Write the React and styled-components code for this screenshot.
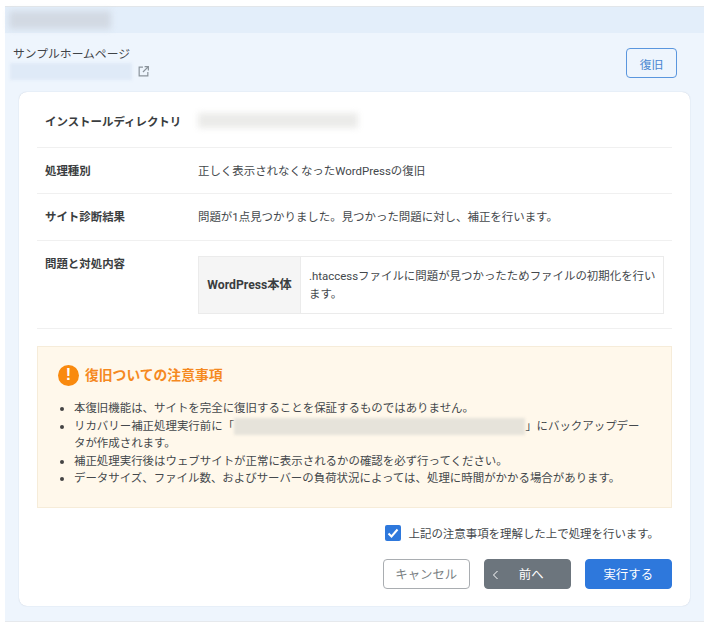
import React from 'react';
import styled, { createGlobalStyle } from 'styled-components';

const GlobalStyle = createGlobalStyle`
  html, body {
    margin: 0;
    padding: 0;
    background: #fff;
    font-family: Roboto, "Noto Sans CJK JP", "Liberation Sans", sans-serif;
    font-size: 11.45px;
    color: #3c4043;
  }
`;

const Page = styled.div`
  width: 710px;
  height: 626px;
  padding: 6px 6px 4px 5px;
  box-sizing: border-box;
`;

const Panel = styled.div`
  height: 100%;
  background: #eef5fd;
  border-top: 1px solid #e2e6ea;
  border-bottom: 1px solid #e6e9ed;
  box-sizing: border-box;
`;

const TopBar = styled.div`
  height: 26px;
  background: #e3eefa;
  display: flex;
  align-items: center;
  padding-left: 4px;
`;

const Blur = styled.div`
  width: ${(p) => p.$w}px;
  height: ${(p) => p.$h}px;
  background: ${(p) => p.$color};
  filter: blur(${(p) => p.$blur || 2}px);
  flex: none;
`;

const SiteRow = styled.div`
  display: flex;
  justify-content: space-between;
  height: 59px;
  padding: 12px 27px 0 8px;
  box-sizing: border-box;
`;

const SiteName = styled.div`
  line-height: 18px;
  font-size: 11.8px;
  color: #3f4347;
`;

const SiteUrl = styled.div`
  display: flex;
  align-items: center;
  gap: 5px;
  height: 18px;
  margin: -1px 0 0 -3px;
  color: #8a939b;
`;

const RestoreButton = styled.button`
  width: 51px;
  height: 30px;
  margin-top: 3px;
  font: inherit;
  font-size: 11.8px;
  color: #4a86d0;
  background: #eef5fd;
  border: 1.5px solid #5a96de;
  border-radius: 4px;
`;

const Card = styled.div`
  margin: 0 14px;
  height: 514px;
  padding: 9px 18px 0;
  box-sizing: border-box;
  background: #fff;
  border-radius: 8px;
  box-shadow: 0 0 1px rgba(120, 140, 170, 0.5);
`;

const InfoRow = styled.div`
  display: grid;
  grid-template-columns: 153px 1fr;
  height: ${(p) => p.$h}px;
  padding: ${(p) => p.$top}px 0 0 8px;
  box-sizing: border-box;
  border-bottom: 1px solid #f0f0f0;
  line-height: 18px;
`;

const Label = styled.div`
  font-weight: 700;
  color: #3a3d40;
`;

const Value = styled.div`
  color: #44484c;
`;

const IssueTable = styled.div`
  display: grid;
  grid-template-columns: 102px 1fr;
  width: 466px;
  height: 58px;
  margin-top: 1px;
  border: 1px solid #ebebeb;
  box-sizing: border-box;
`;

const IssueCell = styled.div`
  display: flex;
  align-items: center;
`;

const IssueHead = styled(IssueCell)`
  justify-content: center;
  background: #f5f5f5;
  border-right: 1px solid #ebebeb;
  font-size: 12.2px;
  font-weight: 700;
  color: #3a3d40;
`;

const IssueBody = styled(IssueCell)`
  padding: 0 3px 0 8px;
  color: #44484c;
  line-height: 18px;
`;

const Notice = styled.div`
  height: 162px;
  margin-top: 17px;
  padding: 17px 20px 0;
  box-sizing: border-box;
  background: #fff8eb;
  border: 1px solid #f6ecd9;
`;

const NoticeTitle = styled.div`
  display: flex;
  align-items: center;
  gap: 6px;
  font-size: 13.8px;
  font-weight: 700;
  line-height: 22px;
  color: #f5891f;
`;

const WarnIcon = styled.span`
  width: 21px;
  height: 21px;
  flex: none;
  border-radius: 50%;
  background: #f98a0f;
  color: #fff;
  display: flex;
  align-items: center;
  justify-content: center;
  font-family: "Liberation Sans", sans-serif;
  font-size: 16px;
  font-weight: 700;
`;

const NoticeList = styled.ul`
  list-style: none;
  margin: 14px 0 0;
  padding: 0 0 0 16px;
  width: 570px;
  line-height: 17.5px;
  color: #44484c;
`;

const NoticeItem = styled.li`
  position: relative;
  &::before {
    content: '';
    position: absolute;
    left: -14px;
    top: 7px;
    width: 4px;
    height: 4px;
    border-radius: 50%;
    background: #444;
  }
`;

const InlineBlur = styled.span`
  display: inline-block;
  vertical-align: middle;
  width: 291px;
  height: 17px;
  background: #e6e3da;
  filter: blur(1.5px);
`;

const Agree = styled.label`
  display: flex;
  align-items: center;
  justify-content: flex-end;
  gap: 8px;
  height: 16px;
  margin-top: 17px;
  padding-right: 13px;
  color: #44484c;
`;

const CheckBox = styled.span`
  width: 16px;
  height: 16px;
  border-radius: 2px;
  background: #2e78dc;
  display: flex;
  align-items: center;
  justify-content: center;
`;

const Actions = styled.div`
  display: flex;
  justify-content: flex-end;
  gap: 13.5px;
  margin-top: 18px;
`;

const ActionButton = styled.button`
  position: relative;
  width: 87.5px;
  height: 30px;
  padding: 0 0 0 ${(p) => p.$shift || 0}px;
  font: inherit;
  font-size: 12.4px;
  border-radius: 4px;
  color: ${(p) => p.$color};
  background: ${(p) => p.$bg};
  border: 1px solid ${(p) => p.$border};
`;

const Chevron = styled.svg`
  position: absolute;
  left: 7px;
  top: 10px;
`;

export default function App() {
  return (
    <>
      <GlobalStyle />
      <Page>
        <Panel>
          <TopBar>
            <Blur $w={102} $h={18} $color="#d2d9e3" $blur={3} />
          </TopBar>
          <SiteRow>
            <div>
              <SiteName>サンプルホームページ</SiteName>
              <SiteUrl>
                <Blur $w={122} $h={17} $color="#dfeaf7" $blur={1.5} />
                <svg width="13" height="13" viewBox="0 0 24 24" fill="none" stroke="currentColor" strokeWidth="2.2">
                  <path d="M11 4H4v16h16v-7" />
                  <path d="M14 3h7v7M21 3 11 13" />
                </svg>
              </SiteUrl>
            </div>
            <RestoreButton>復旧</RestoreButton>
          </SiteRow>
          <Card>
            <InfoRow $h={47} $top={12}>
              <Label>インストールディレクトリ</Label>
              <Blur $w={160} $h={15} $color="#ebebe9" $blur={3} />
            </InfoRow>
            <InfoRow $h={46} $top={14}>
              <Label>処理種別</Label>
              <Value>正しく表示されなくなったWordPressの復旧</Value>
            </InfoRow>
            <InfoRow $h={47} $top={14}>
              <Label>サイト診断結果</Label>
              <Value>問題が1点見つかりました。見つかった問題に対し、補正を行います。</Value>
            </InfoRow>
            <InfoRow $h={88} $top={14}>
              <Label>問題と対処内容</Label>
              <IssueTable>
                <IssueHead>WordPress本体</IssueHead>
                <IssueBody>.htaccessファイルに問題が見つかったためファイルの初期化を行います。</IssueBody>
              </IssueTable>
            </InfoRow>
            <Notice>
              <NoticeTitle>
                <WarnIcon>!</WarnIcon>
                復旧ついての注意事項
              </NoticeTitle>
              <NoticeList>
                <NoticeItem>本復旧機能は、サイトを完全に復旧することを保証するものではありません。</NoticeItem>
                <NoticeItem>
                  リカバリー補正処理実行前に「
                  <InlineBlur />
                  」にバックアップデータが作成されます。
                </NoticeItem>
                <NoticeItem>補正処理実行後はウェブサイトが正常に表示されるかの確認を必ず行ってください。</NoticeItem>
                <NoticeItem>データサイズ、ファイル数、およびサーバーの負荷状況によっては、処理に時間がかかる場合があります。</NoticeItem>
              </NoticeList>
            </Notice>
            <Agree>
              <CheckBox>
                <svg width="12" height="12" viewBox="0 0 12 12" fill="none" stroke="#fff" strokeWidth="2">
                  <path d="M1.5 6.5 4.5 9.5 10.5 2.5" />
                </svg>
              </CheckBox>
              上記の注意事項を理解した上で処理を行います。
            </Agree>
            <Actions>
              <ActionButton $color="#7a7f84" $bg="#fff" $border="#a9adb1">キャンセル</ActionButton>
              <ActionButton $color="#fff" $bg="#6c757d" $border="#6c757d" $shift={8}>
                <Chevron width="7" height="10" viewBox="0 0 7 10" fill="none" stroke="#fff" strokeWidth="1">
                  <path d="M5.5 1 1.5 5l4 4" />
                </Chevron>
                前へ
              </ActionButton>
              <ActionButton $color="#fff" $bg="#2e78dc" $border="#2e78dc">実行する</ActionButton>
            </Actions>
          </Card>
        </Panel>
      </Page>
    </>
  );
}
